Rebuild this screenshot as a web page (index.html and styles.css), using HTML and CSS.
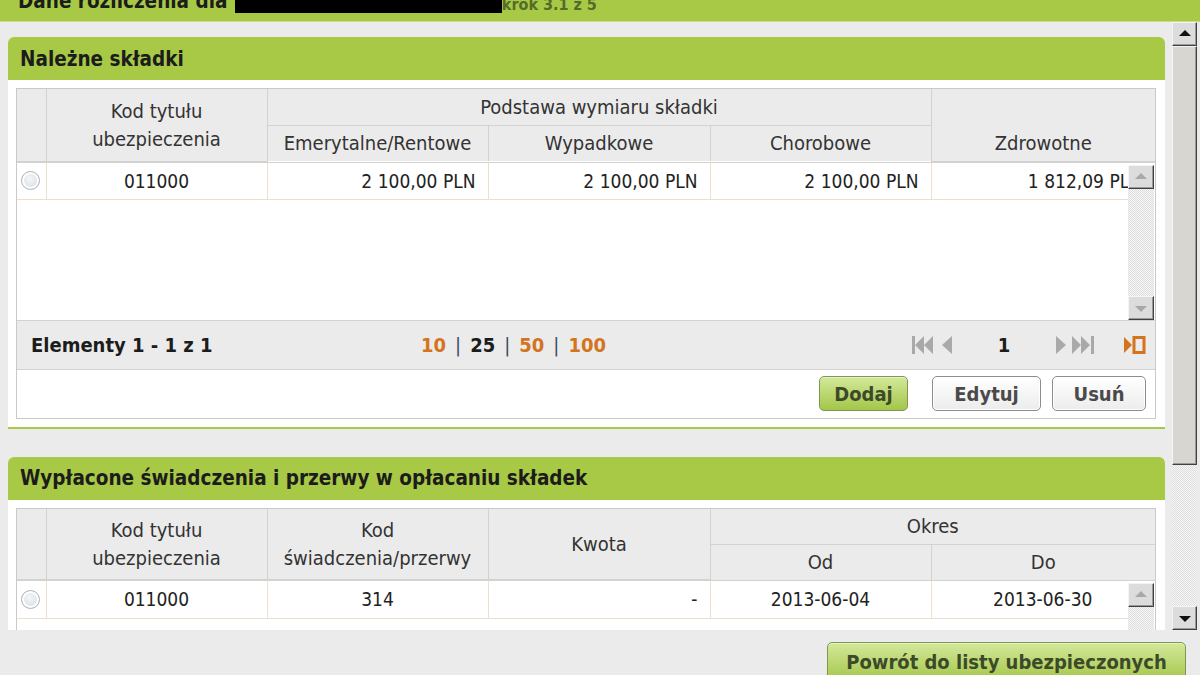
FILE: index.html
```html
<!DOCTYPE html>
<html lang="pl">
<head>
	<title>Dane rozliczenia</title>
	<meta charset="utf-8">
	<meta name="viewport" content="width=device-width, initial-scale=1">
	<link rel="stylesheet" href="styles.css">
</head>
<body>
	<div class="topbar">
		<h1>Dane rozliczenia dla <span class="redact"></span></h1>
		<span class="step">krok 3.1 z 5</span>
	</div>

	<div class="viewport">
		<div class="content">
			<section class="panel">
				<h2>Należne składki</h2>
				<div class="panel-body">
					<div class="grid">
						<table class="head">
							<colgroup><col class="c-radio"><col class="c-wide"><col class="c-wide"><col class="c-wide2"><col class="c-wide"><col></colgroup>
							<tr class="r1">
								<th rowspan="2"></th>
								<th rowspan="2">Kod tytułu<br>ubezpieczenia</th>
								<th colspan="3">Podstawa wymiaru składki</th>
								<th rowspan="2" class="low">Zdrowotne</th>
							</tr>
							<tr class="r2">
								<th>Emerytalne/Rentowe</th>
								<th>Wypadkowe</th>
								<th>Chorobowe</th>
							</tr>
						</table>
						<div class="grid-body tall">
							<div class="rows">
								<table class="body">
									<colgroup><col class="c-radio"><col class="c-wide"><col class="c-wide"><col class="c-wide2"><col class="c-wide"><col></colgroup>
									<tr>
										<td><span class="radio"></span></td>
										<td class="center">011000</td>
										<td class="num">2 100,00 PLN</td>
										<td class="num">2 100,00 PLN</td>
										<td class="num">2 100,00 PLN</td>
										<td class="num">1 812,09 PLN</td>
									</tr>
								</table>
							</div>
							<div class="vbar small">
								<span class="sb-btn up"></span>
								<span class="sb-track"></span>
								<span class="sb-btn down"></span>
							</div>
						</div>
						<div class="pager">
							<span class="count">Elementy 1 - 1 z 1</span>
							<span class="sizes">
								<a>10</a><i>|</i><b>25</b><i>|</i><a>50</a><i>|</i><a>100</a>
							</span>
							<span class="nav">
								<svg class="first" width="26" height="20" viewBox="0 0 26 20"><rect x="0" y="1" width="3" height="18" fill="#a9a9a9"/><path d="M3 10 L12 1 V19 Z M12 10 L21 1 V19 Z" fill="#a9a9a9"/></svg>
								<svg class="prev" width="14" height="20" viewBox="0 0 14 20"><path d="M2 10 L12 1 V19 Z" fill="#a9a9a9"/></svg>
								<span class="page">1</span>
								<svg class="next" width="14" height="20" viewBox="0 0 14 20"><path d="M2 1 L12 10 L2 19 Z" fill="#a9a9a9"/></svg>
								<svg class="last" width="26" height="20" viewBox="0 0 26 20"><path d="M1 1 L10 10 L1 19 Z M10 1 L19 10 L10 19 Z" fill="#a9a9a9"/><rect x="20" y="1" width="3" height="18" fill="#a9a9a9"/></svg>
								<svg class="export" width="24" height="20" viewBox="0 0 24 20"><path d="M1 2 L9 10 L1 18 Z" fill="#d4741c"/><rect x="11" y="2.5" width="10" height="15" fill="none" stroke="#d4741c" stroke-width="3"/></svg>
							</span>
						</div>
						<div class="actions">
							<button class="btn green dodaj">Dodaj</button>
							<button class="btn edytuj">Edytuj</button>
							<button class="btn usun">Usuń</button>
						</div>
					</div>
				</div>
			</section>

			<section class="panel">
				<h2>Wypłacone świadczenia i przerwy w opłacaniu składek</h2>
				<div class="panel-body">
					<div class="grid">
						<table class="head second">
							<colgroup><col class="c-radio"><col class="c-wide"><col class="c-wide"><col class="c-wide2"><col class="c-wide"><col></colgroup>
							<tr class="r1">
								<th rowspan="2"></th>
								<th rowspan="2">Kod tytułu<br>ubezpieczenia</th>
								<th rowspan="2">Kod<br>świadczenia/przerwy</th>
								<th rowspan="2">Kwota</th>
								<th colspan="2">Okres</th>
							</tr>
							<tr class="r2">
								<th>Od</th>
								<th>Do</th>
							</tr>
						</table>
						<div class="grid-body">
							<div class="rows">
								<table class="body">
									<colgroup><col class="c-radio"><col class="c-wide"><col class="c-wide"><col class="c-wide2"><col class="c-wide"><col></colgroup>
									<tr>
										<td><span class="radio"></span></td>
										<td class="center">011000</td>
										<td class="center">314</td>
										<td class="num">-</td>
										<td class="center">2013-06-04</td>
										<td class="center">2013-06-30</td>
									</tr>
								</table>
							</div>
							<div class="vbar small">
								<span class="sb-btn up"></span>
								<span class="sb-track"></span>
								<span class="sb-btn down"></span>
							</div>
						</div>
					</div>
				</div>
			</section>
		</div>

		<div class="vbar page-bar">
			<span class="sb-btn up"></span>
			<span class="sb-thumb"></span>
			<span class="sb-track"></span>
			<span class="sb-btn down"></span>
		</div>
	</div>

	<div class="footer">
		<button class="btn green back">Powrót do listy ubezpieczonych</button>
	</div>
</body>
</html>
```

FILE: styles.css
```css
* {
	box-sizing: border-box;
	font-family: "DejaVu Sans Condensed", "DejaVu Sans", sans-serif;
}

html, body {
	margin: 0;
	padding: 0;
	width: 1200px;
	height: 675px;
	overflow: hidden;
	background-color: #ebebeb;
	color: #222;
	font-size: 20px;
}

.topbar {
	height: 22px;
	overflow: hidden;
	display: flex;
	align-items: flex-start;
	background-color: #a8c945;
	border-bottom: 1px solid #c7dd86;
	padding-left: 18px;
}

	.topbar h1 {
		margin: -14px 0 0 0;
		font-size: 20.5px;
		line-height: 30px;
		color: #1c1c1c;
		white-space: nowrap;
	}

	.topbar .redact {
		display: inline-block;
		width: 267px;
		height: 27px;
		margin-left: 1px;
		vertical-align: -5px;
		background-color: #000;
	}

	.topbar .step {
		margin-top: -5px;
		font-size: 16px;
		font-weight: bold;
		line-height: 20px;
		color: #556b2a;
	}

.viewport {
	height: 608px;
	display: flex;
	overflow: hidden;
}

.content {
	flex: 1;
	min-width: 0;
	padding: 15px 7px 0 8px;
	display: flex;
	flex-direction: column;
	gap: 28px;
}

.panel {
	border-bottom: 2px solid #a8c945;
	background-color: #fff;
	border-radius: 6px 6px 0 0;
	flex-shrink: 0;
}

	.panel h2 {
		margin: 0;
		height: 43px;
		padding: 0 12px;
		display: flex;
		align-items: center;
		font-size: 20.5px;
		font-weight: bold;
		color: #1c1c1c;
		background-color: #a8c945;
		border-radius: 6px 6px 0 0;
	}

	.panel-body {
		padding: 8px 9px 8px 8px;
	}

.grid {
	border: 1px solid #c9c9c9;
}

table {
	width: 100%;
	border-collapse: collapse;
	table-layout: fixed;
}

	col.c-radio { width: 29px; }
	col.c-wide { width: 221px; }
	col.c-wide2 { width: 222px; }

.head th {
	background-color: #ebebeb;
	border: 1px solid #d2d2d2;
	border-top: none;
	font-weight: normal;
	font-size: 20px;
	color: #333;
	line-height: 28px;
	padding: 0 2px;
	text-align: center;
	vertical-align: middle;
	white-space: nowrap;
}

	.head th:first-child {
		border-left: none;
	}

	.head th:last-child {
		border-right: none;
	}

	.head tr.r1 th {
		height: 36px;
	}

	.head tr.r2 th {
		height: 36px;
		border-bottom: none;
	}

	.head.second tr.r2 th {
		height: 35px;
	}

	.head th.low {
		vertical-align: bottom;
		padding-bottom: 4px;
		border-right: none;
	}

.grid-body {
	display: flex;
	border-top: 1px solid #d2d2d2;
	height: 158px;
}

	.grid-body .rows {
		flex: 1;
		min-width: 0;
		overflow: hidden;
		background-color: #fff;
	}

	.grid-body .rows table {
		width: 1138px;
	}

.body td {
	height: 37px;
	border-right: 1px solid #eddfcc;
	border-bottom: 1px solid #eddfcc;
	padding: 0 12px;
	font-size: 19px;
	color: #222;
	white-space: nowrap;
	overflow: hidden;
}

	.body td:first-child {
		padding: 0 0 0 4px;
	}

	.body td.center {
		text-align: center;
	}

	.body td.num {
		text-align: right;
	}

.radio {
	display: block;
	width: 19px;
	height: 19px;
	border-radius: 50%;
	border: 1px solid #b4b4b4;
	background: radial-gradient(circle at 45% 40%, #f4f7f9 0, #dde3e8 60%, #c9cfd4 100%);
	box-shadow: inset 0 0 0 2px #fff;
}

.vbar {
	display: flex;
	flex-direction: column;
	width: 26px;
	flex-shrink: 0;
	background-color: #fff;
}

	.vbar.small {
		padding: 2px 1px 0 0;
		width: 27px;
	}

	.sb-btn {
		height: 24px;
		flex-shrink: 0;
		background-color: #dcdcdc;
		border: 1px solid;
		border-color: #f4f4f4 #404040 #404040 #f4f4f4;
		box-shadow: inset -1px -1px 0 #9a9a9a;
		display: flex;
		align-items: center;
		justify-content: center;
	}

		.sb-btn::after {
			content: "";
			border-left: 6px solid transparent;
			border-right: 6px solid transparent;
		}

		.sb-btn.up::after {
			border-bottom: 6px solid #111;
			margin-top: -2px;
		}

		.sb-btn.down::after {
			border-top: 6px solid #111;
			margin-top: 2px;
		}

		.small .sb-btn.up::after {
			border-bottom-color: #a8a8a8;
		}

		.small .sb-btn.down::after {
			border-top-color: #a8a8a8;
		}

	.sb-track {
		flex: 1;
		background: repeating-conic-gradient(#dedede 0 25%, #f6f6f6 0 50%) 0 0 / 2px 2px;
	}

	.sb-thumb {
		height: 419px;
		flex-shrink: 0;
		background-color: #d8d6d0;
		border: 1px solid;
		border-color: #f4f4f4 #404040 #404040 #f4f4f4;
		box-shadow: inset -1px -1px 0 #9a9a9a;
	}

.page-bar {
	width: 28px;
	padding-right: 3px;
	background-color: #ebebeb;
}

.pager {
	height: 50px;
	display: flex;
	align-items: center;
	padding: 0 8px 0 14px;
	background-color: #ebebeb;
	border-top: 1px solid #d2d2d2;
	border-bottom: 1px solid #d2d2d2;
	font-weight: bold;
	font-size: 20px;
}

	.pager .count {
		width: 390px;
		color: #1c1c1c;
	}

	.sizes a {
		color: #d4741c;
	}

	.sizes b {
		color: #1c1c1c;
	}

	.sizes i {
		font-style: normal;
		font-weight: normal;
		color: #3a4a66;
		margin: 0 9px;
	}

	.nav {
		margin-left: auto;
		display: flex;
		align-items: center;
	}

		.nav .prev {
			margin-left: 2px;
		}

		.nav .page {
			width: 100px;
			text-align: center;
			color: #1c1c1c;
		}

		.nav .last {
			margin-left: 3px;
		}

		.nav .export {
			margin-left: 26px;
		}

.actions {
	height: 48px;
	display: flex;
	align-items: center;
	justify-content: flex-end;
	padding-right: 9px;
	background-color: #fff;
}

.btn {
	height: 35px;
	border: 1px solid #8c8c8c;
	border-radius: 5px;
	font-size: 20px;
	font-weight: bold;
	color: #4a4a4a;
	background: linear-gradient(#ffffff, #ececec);
	box-shadow: inset 0 0 0 1px #fff;
	padding: 0;
}

	.btn.green {
		border-color: #7d9950;
		color: #3d4a2a;
		background: linear-gradient(#d3e89a, #a4c64a);
		box-shadow: inset 0 1px 0 #e6f2c4;
	}

	.btn.dodaj {
		width: 89px;
	}

	.btn.edytuj {
		width: 109px;
		margin-left: 24px;
	}

	.btn.usun {
		width: 94px;
		margin-left: 11px;
	}

.footer {
	display: flex;
	justify-content: flex-end;
	padding: 12px 14px 0 0;
}

	.btn.back {
		width: 359px;
		height: 40px;
		font-size: 20px;
	}
```
